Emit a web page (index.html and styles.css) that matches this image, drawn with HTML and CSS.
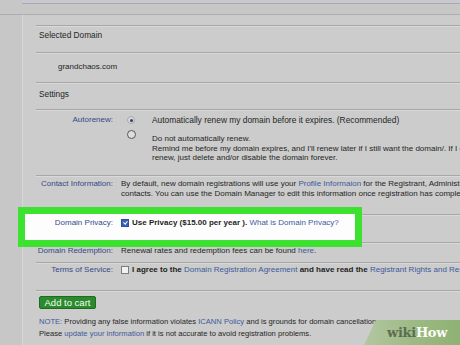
FILE: index.html
```html
<!DOCTYPE html>
<html lang="en">
<head>
<meta charset="utf-8">
<title>Domain settings</title>
<link rel="stylesheet" href="styles.css">
</head>
<body>
<div class="topband"></div>
<div class="page">
  <div class="panel">
    <div class="row head first">Selected Domain</div>
    <div class="row domain">grandchaos.com</div>
    <div class="row head settings">Settings</div>

    <div class="row field autorenew">
      <div class="label">Autorenew:</div>
      <div class="value">
        <div class="opt"><span class="radio on"></span><span class="opt-line">Automatically renew my domain before it expires. (Recommended)</span></div>
        <div class="opt opt2"><span class="radio"></span><span class="opt-text">Do not automatically renew.<br>Remind me before my domain expires, and I'll renew later if I still want the domain/. If I choose not to<br>renew, just delete and/or disable the domain forever.</span></div>
      </div>
    </div>

    <div class="row field contact">
      <div class="label">Contact Information:</div>
      <div class="value">By default, new domain registrations will use your <a href="#">Profile Informaion</a> for the Registrant, Administrative, Technical<br>contacts. You can use the Domain Manager to edit this information once registration has completed.</div>
    </div>

    <div class="row field privacy">
      <div class="label">Domain Privacy:</div>
      <div class="value check-line"><span class="check on"></span><span><b class="strong">Use Privacy ($15.00 per year ).</b> <a href="#">What is Domain Privacy?</a></span></div>
    </div>

    <div class="row field redemption">
      <div class="label">Domain Redemption:</div>
      <div class="value">Renewal rates and redemption fees can be found <a href="#">here</a>.</div>
    </div>

    <div class="row field terms">
      <div class="label">Terms of Service:</div>
      <div class="value check-line"><span class="check"></span><span><b class="strong">I agree to the</b> <a href="#">Domain Registration Agreement</a> <b class="strong">and have read the</b> <a href="#">Registrant Rights and Responsibilities</a></span></div>
    </div>

    <div class="footer">
      <button class="cart">Add to cart</button>
      <p class="note"><a href="#">NOTE:</a> Providing any false information violates <a href="#">ICANN Policy</a> and is grounds for domain cancellation.<br>Please <a href="#">update your information</a> if it is not accurate to avoid registration problems.</p>
    </div>
  </div>
</div>
<div class="wikihow"><span class="wiki">wiki</span><span class="how">How</span></div>
</body>
</html>
```

FILE: styles.css
```css
html, body {
  margin: 0;
  padding: 0;
  width: 460px;
  height: 345px;
  overflow: hidden;
}
body {
  background: #c6c7c6;
  font-family: "Liberation Sans", Arial, sans-serif;
  font-size: 8px;
  line-height: 10px;
  color: #262626;
  position: relative;
}
a {
  color: #3d5a9c;
  text-decoration: none;
}
.topband {
  margin-left: 22px;
  height: 3px;
  background: #c9c9d2;
  border-bottom: 1px solid #a9a9b0;
  margin-bottom: 10px;
}
.page {
  border-top: 1px solid #adadad;
}
.panel {
  margin-left: 22px;
  border-left: 1px solid #d8d8d8;
  background: #cbcccb;
  padding: 10px 0 0 13px;
  height: 330px;
  box-sizing: border-box;
}
.row {
  border-top: 1px solid #a7a7a7;
  box-shadow: inset 0 1px 0 #d9d9d9;
  white-space: nowrap;
}
.head {
  padding: 4px 0 12px 3px;
  font-size: 8.3px;
}
.domain {
  padding: 9px 0 10px 22px;
}
.head.settings {
  padding: 6px 0 10px 3px;
}
.field {
  display: grid;
  grid-template-columns: 77px minmax(0, 1fr);
  column-gap: 8px;
}
.label {
  text-align: right;
  color: #36498a;
}
.autorenew { padding: 5px 0 12px; }
.contact { padding: 3px 0 15px; }
.privacy { padding: 3px 0 14px; position: relative; }
.redemption { padding: 3px 0 6px; }
.terms { padding: 2px 0 15px; }

.opt {
  display: flex;
  align-items: center;
  height: 10px;
}
.opt-line {
  font-size: 8.4px;
}
.opt2 {
  align-items: flex-start;
  height: auto;
}
.radio {
  width: 6px;
  height: 6px;
  border: 1px solid #8a8a8a;
  border-radius: 50%;
  background: #e4e4e4;
  margin: 0 17px 0 6px;
  flex: none;
  position: relative;
}
.radio.on {
  border-color: #a9a9a9;
  background: #d8d8d8;
}
.radio.on::after {
  content: "";
  position: absolute;
  left: 1.5px;
  top: 1.5px;
  width: 3px;
  height: 3px;
  border-radius: 50%;
  background: #2b3d7a;
}
.opt2 .radio {
  width: 7px;
  height: 7px;
  border-color: #555;
  margin-top: 5px;
  margin-right: 16px;
  background: #dedede;
}
.opt-text {
  padding-top: 9px;
  line-height: 9.6px;
}

.check-line {
  display: flex;
  align-items: center;
  height: 10px;
}
.check {
  width: 6px;
  height: 6px;
  border: 1px solid #7d7d7d;
  background: #f2f2f2;
  margin-right: 3px;
  flex: none;
  position: relative;
}
.check.on {
  background: #3562b6;
  border-color: #2c4f98;
}
.check.on::after {
  content: "";
  position: absolute;
  left: 1.5px;
  top: 0.5px;
  width: 1.5px;
  height: 3px;
  border: solid #fff;
  border-width: 0 1px 1px 0;
  transform: rotate(40deg);
}
.strong {
  font-weight: bold;
  color: #1e1e1e;
}
.privacy::after {
  content: "";
  position: absolute;
  left: -18px;
  top: -8px;
  width: 344px;
  height: 40px;
  box-sizing: border-box;
  border: 7px solid #3de130;
  background: #fdfdfd;
  z-index: 1;
}
.privacy > * {
  position: relative;
  z-index: 2;
}

.footer {
  border-top: 1px solid #a7a7a7;
  box-shadow: inset 0 1px 0 #d9d9d9;
  padding: 5px 0 0 3px;
}
.cart {
  display: block;
  height: 13px;
  width: 57px;
  padding: 0;
  border: 1px solid #206b22;
  border-radius: 2px;
  background: #2c8a2e;
  color: #f4fff4;
  font-family: "Liberation Sans", Arial, sans-serif;
  font-size: 9.5px;
  line-height: 11px;
}
.note {
  margin: 7px 0 0;
  font-size: 7.6px;
  line-height: 12px;
  white-space: nowrap;
  color: #262626;
}

.wikihow {
  position: absolute;
  left: 364px;
  top: 320px;
  width: 96px;
  height: 25px;
  clip-path: polygon(12px 0, 100% 0, 100% 100%, 0 100%);
  background: linear-gradient(90deg, #b3c7a2 0%, #9dba84 50%, #8fb173 100%);
  display: flex;
  align-items: center;
  padding-left: 23px;
  box-sizing: border-box;
  font-family: "DejaVu Serif", serif;
  font-weight: bold;
  font-size: 13px;
  letter-spacing: -0.3px;
}
.wiki { color: #5b6d50; }
.how { color: #fbfdf8; }
```
